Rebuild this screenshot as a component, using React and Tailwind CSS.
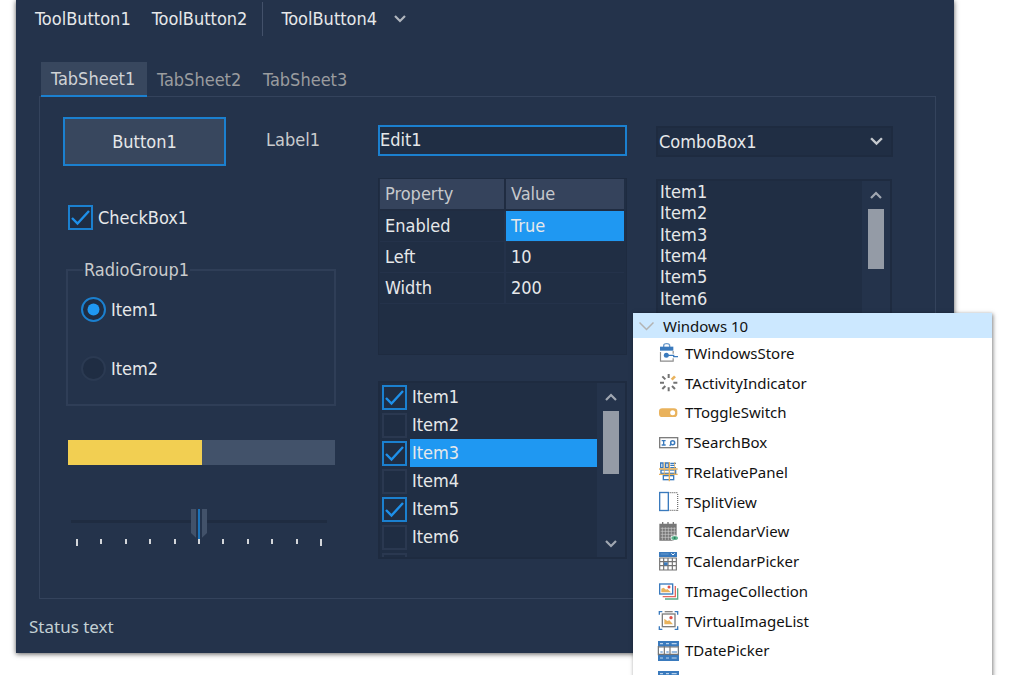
import React from "react";

const UI_FONT = "font-['DejaVu_Sans_Condensed','DejaVu_Sans',sans-serif]";

function Chevron({ up = false, className = "h-2 w-3" }) {
  return (
    <svg viewBox="0 0 12 8" className={className} fill="none" stroke="currentColor" strokeWidth="2.2" aria-hidden="true">
      <path d={up ? "M1 7 6 2l5 5" : "M1 1l5 5 5-5"} />
    </svg>
  );
}

function TickBox({ label, name = label, defaultChecked, className = "" }) {
  return (
    <label className={`flex items-center gap-[5px] ${className}`}>
      <span className="grid shrink-0">
        <input
          type="checkbox"
          aria-label={name}
          defaultChecked={defaultChecked}
          className="peer col-start-1 row-start-1 h-[25px] w-[25px] appearance-none border-2 border-[#2a3850] bg-[#1f2d43] checked:border-[#1b80cf]"
        />
        <svg
          viewBox="0 0 25 25"
          className="pointer-events-none invisible col-start-1 row-start-1 h-[25px] w-[25px] peer-checked:visible"
          fill="none"
          stroke="#1e90ea"
          strokeWidth="2.4"
          aria-hidden="true"
        >
          <path d="M4 13l5.5 5.500L21 6" />
        </svg>
      </span>
      {label}
    </label>
  );
}

function RadioButton({ label, defaultChecked }) {
  return (
    <label className="flex items-center gap-[5px]">
      <span className="grid shrink-0">
        <input
          type="radio"
          name="radiogroup1"
          defaultChecked={defaultChecked}
          className="peer col-start-1 row-start-1 h-[25px] w-[25px] appearance-none rounded-full border-2 border-[#2b3a52] bg-[#1f2d43] checked:border-[#1b80cf]"
        />
        <svg viewBox="0 0 25 25" className="pointer-events-none invisible col-start-1 row-start-1 h-[25px] w-[25px] peer-checked:visible" aria-hidden="true">
          <circle cx="12.5" cy="12.5" r="6" fill="#1f98f2" />
        </svg>
      </span>
      {label}
    </label>
  );
}

function ScrollBar({ thumb }) {
  return (
    <div className="flex w-7 shrink-0 flex-col items-center bg-[#24334b] text-[#a0a7b1]">
      <button type="button" aria-label="Scroll up" className="flex h-7 w-full items-center justify-center">
        <Chevron up />
      </button>
      <div className={`w-4 bg-[#949ba6] ${thumb}`} />
      <button type="button" aria-label="Scroll down" className="mt-auto flex h-[26px] w-full items-center justify-center">
        <Chevron />
      </button>
    </div>
  );
}

const GRAY = "#737373";
const BLUE = "#3a7abd";
const ORANGE = "#e9b25c";

const icons = {
  store: (
    <>
      <path d="M14 12V8q0-6 9-6t9 6v4" fill="none" stroke="#6b9bcc" strokeWidth="4" />
      <path d="M3 11h40v12H3z" fill={BLUE} />
      <path d="M4.500 27v27.500h38V46" fill="none" stroke="#8c8c8c" strokeWidth="3.500" />
      <path d="M42.500 24v8" stroke="#8c8c8c" strokeWidth="3.500" />
      <circle cx="22" cy="37" r="7.500" fill={BLUE} />
      <path d="M22 37h22v4h13" fill="none" stroke={BLUE} strokeWidth="4" />
    </>
  ),
  activity: (
    <g fill="none" strokeWidth="6">
      <path stroke={GRAY} d="M29 3v12M29 43v12M3 29h12M43 29h12M10 10l9 9M39 39l9 9M10 48l9-9" />
      <path stroke={ORANGE} strokeWidth="8" d="M38 20l10-10" />
    </g>
  ),
  toggle: (
    <>
      <rect x="0" y="16" width="55" height="26" rx="10" fill={ORANGE} />
      <circle cx="41" cy="29" r="7.500" fill="#fff" />
    </>
  ),
  search: (
    <>
      <rect x="2" y="14" width="54" height="30" fill="#fff" stroke="#7d7d7d" strokeWidth="4" />
      <path d="M8 23h12M8 36h12M14 23v13" stroke={BLUE} strokeWidth="4" />
      <circle cx="41" cy="29" r="6" fill="none" stroke={BLUE} strokeWidth="4.500" />
      <path d="M37 33l-5 5" stroke={BLUE} strokeWidth="4" />
    </>
  ),
  relative: (
    <>
      <g fill="#fff" stroke={BLUE} strokeWidth="4">
        <path d="M5 3h7v14H5zM20 3h8v14H20z" />
        <path d="M34 4h17M34 17h17M34 10h13" />
        <rect x="6" y="24" width="44" height="10" />
        <rect x="13" y="41" width="31" height="12" />
      </g>
      <path d="M0 21h56M31 0v58M0 37h56" stroke={ORANGE} strokeWidth="4" />
      <path d="M16 0v38M47 0v38" stroke={ORANGE} strokeWidth="2.5" />
    </>
  ),
  split: (
    <>
      <rect x="2" y="1.500" width="26" height="54" fill="#fff" stroke={BLUE} strokeWidth="4" />
      <path d="M32 2h25M56 6v50M32 55h25" fill="none" stroke="#666" strokeWidth="3.500" strokeDasharray="3 3" />
    </>
  ),
  calendar: (
    <>
      <path d="M1 5h52v42l-9 9H1z" fill="#777" />
      <path d="M11 0v9M27 0v9M43 0v9" stroke="#777" strokeWidth="4" />
      <path d="M5 19h45M5 28h45M5 37h45M5 46h45M10 16v38M19 16v38M28 16v38M37 16v38M46 16v38" stroke="#d0d0d0" strokeWidth="1.800" />
      <ellipse cx="47" cy="48" rx="12" ry="8" fill="#fff" />
      <ellipse cx="47" cy="48" rx="10" ry="6" fill="#61b590" />
      <circle cx="47" cy="48" r="3" fill="#287a59" />
    </>
  ),
  calendarPicker: (
    <>
      <path d="M0 0h54v15H0z" fill={BLUE} />
      <path d="M37 4l5 5 5-5" stroke="#fff" strokeWidth="3" fill="none" />
      <path d="M5 6h24" stroke="#7faad6" strokeWidth="2" />
      <path d="M2 18h50v36H2zM2 29h50M2 41h50M14 18v36M27 18v36M40 18v36" fill="none" stroke={GRAY} strokeWidth="3.500" />
      <path d="M15 31h11v9H15z" fill={BLUE} />
    </>
  ),
  images: (
    <>
      <path d="M56 22v32H18" fill="none" stroke="#5aaa87" strokeWidth="4" />
      <path d="M49 15v32H11" fill="none" stroke="#e4665d" strokeWidth="4" />
      <rect x="2" y="9" width="39" height="30" fill="#fff" stroke={BLUE} strokeWidth="4" />
      <path d="M7 34V23l7-3 7 6 4-2 11 10z" fill={ORANGE} />
      <circle cx="30" cy="18" r="4.500" fill="#e05048" />
    </>
  ),
  virtualImages: (
    <>
      <path d="M1 11V2h9M47 2h9v9M1 46v9h9M47 55h9v-9" fill="none" stroke={BLUE} strokeWidth="4" />
      <path d="M17 2h24" stroke="#858585" strokeWidth="4" />
      <rect x="10" y="9" width="38" height="38" fill="#fff" stroke="#7d7d7d" strokeWidth="4" />
      <path d="M16 40V23l9 7 6-2 11 12z" fill={ORANGE} />
      <circle cx="36" cy="20" r="5" fill="#e05048" />
    </>
  ),
  picker: (
    <>
      <path d="M-3 0h63v60H-3z" fill={BLUE} />
      <path d="M-1 17h59v24H-1z" fill="#fff" />
      <path d="M3 8h9M21 8h9M38 8h15M3 51h9M21 51h9M38 51h15" stroke="#b9d2eb" strokeWidth="3.500" />
      <path d="M-1 18h59M-1 40h59M16 15v28M33 15v28M58 15v28M-2 15v28" stroke={GRAY} strokeWidth="3.500" fill="none" />
      <path d="M4 33h7M22 33h7M38 33h16" stroke="#9bbce0" strokeWidth="6" />
    </>
  ),
};

const components = [
  ["TWindowsStore", "store"],
  ["TActivityIndicator", "activity"],
  ["TToggleSwitch", "toggle"],
  ["TSearchBox", "search"],
  ["TRelativePanel", "relative"],
  ["TSplitView", "split"],
  ["TCalendarView", "calendar"],
  ["TCalendarPicker", "calendarPicker"],
  ["TImageCollection", "images"],
  ["TVirtualImageList", "virtualImages"],
  ["TDatePicker", "picker"],
  ["TTimePicker", "picker"],
];

function ComponentPalette() {
  return (
    <section className="absolute top-[313px] left-[633px] w-[359px] bg-white font-['Noto_Sans',sans-serif] text-[15px] leading-5 text-[#111] shadow-[1px_1px_4px_rgba(0,0,0,0.5)]">
      <button type="button" aria-expanded="true" className="flex h-[25px] w-full items-center gap-[9px] bg-[#cce8ff] pl-[6px]">
        <svg viewBox="0 0 15 10" className="h-[10px] w-[15px]" fill="none" stroke="#b3b3b3" strokeWidth="1.500" aria-hidden="true">
          <path d="M.5 1.500 7.500 8.500 14.500 1.500" />
        </svg>
        Windows 10
      </button>
      <ul className="grid h-[357px] auto-rows-fr">
        {components.map(([name, icon]) => (
          <li key={name} className="flex min-h-0 items-center gap-[7px] pl-[26px]">
            <svg viewBox="0 0 57 57" className="h-[19px] w-[19px] shrink-0 overflow-visible" aria-hidden="true">
              {icons[icon]}
            </svg>
            {name}
          </li>
        ))}
      </ul>
    </section>
  );
}

function PropertyGrid() {
  return (
    <div className="mt-[22px] h-[177px] border border-[#1e2b40] bg-[#202e44] pr-[2px] pl-px">
      <table className="w-full table-fixed border-collapse text-left">
        <thead>
          <tr className="h-[31px] bg-[#35435c] text-[#c6c9cd]">
            <th scope="col" className="w-[125px] border-r-2 border-b-2 border-[#202c41] px-[5px] font-normal">Property</th>
            <th scope="col" className="border-b-2 border-[#202c41] px-[5px] font-normal">Value</th>
          </tr>
        </thead>
        <tbody>
          {[["Enabled", "True"], ["Left", "10"], ["Width", "200"]].map(([key, value]) => (
            <tr key={key} className="h-[31px]">
              <td className="border-r-2 border-b border-[#24324a] px-[5px]">{key}</td>
              <td className={`border-b border-[#24324a] px-[5px] ${value === "True" ? "bg-[#1f98f2]" : ""}`}>{value}</td>
            </tr>
          ))}
        </tbody>
      </table>
    </div>
  );
}

function CheckList() {
  return (
    <div className="mt-[26px] flex h-[178px] border-2 border-[#1e2b40] bg-[#202e44]">
      <ul className="min-w-0 flex-1 overflow-hidden pl-[2px]">
        {[1, 2, 3, 4, 5, 6].map((n) => (
          <li key={n} className={n === 3 ? "bg-[linear-gradient(#1f98f2,#1f98f2)] bg-[position:28px_0] bg-no-repeat" : ""}>
            <TickBox label={`Item${n}`} defaultChecked={n % 2 === 1} className="h-7" />
          </li>
        ))}
        <li>
          <TickBox name="Item7" className="h-7" />
        </li>
      </ul>
      <ScrollBar thumb="h-[63px]" />
    </div>
  );
}

export default function App() {
  return (
    <main className="relative h-screen overflow-hidden bg-white">
      <div className={`mr-[66px] ml-4 bg-[#24334b] pb-2 text-[18px] leading-6 text-[#e6e8ea] shadow-[0_1px_5px_rgba(0,0,0,0.65)] ${UI_FONT}`}>
        <div role="toolbar" className="flex h-[62px] items-start pl-[19px]">
          <div className="flex h-[38px] items-center">
            <button type="button">ToolButton1</button>
            <button type="button" className="ml-[21px]">ToolButton2</button>
            <span className="ml-[15px] h-[34px] w-px bg-[#43516a]" />
            <button type="button" className="ml-[18px] flex items-center gap-[17px]">
              ToolButton4
              <span className="text-[#b0b6be]"><Chevron /></span>
            </button>
          </div>
        </div>

        <div className="mr-[18px] ml-[23px]">
          <div role="tablist" className="flex pl-[2px] text-[#9a9c9f]">
            <button type="button" role="tab" aria-selected="true" className="-mb-px h-[35px] w-[106px] border-b-2 border-[#1b80cf] bg-[#38475e] px-[10px] text-left text-[#d0d3d6]">
              TabSheet1
            </button>
            <button type="button" role="tab" aria-selected="false" className="w-[106px] px-[10px] pt-px text-left">TabSheet2</button>
            <button type="button" role="tab" aria-selected="false" className="w-[106px] px-[10px] pt-px text-left">TabSheet3</button>
          </div>

          <div role="tabpanel" className="grid h-[503px] grid-cols-[315fr_278fr_237fr] border border-[#34435c] pr-[42px] pl-[23px]">
            <div className="pt-5 pr-[42px]">
              <div className="flex items-start">
                <button type="button" className="h-[49px] w-[163px] border-2 border-[#1b80cf] bg-[#38475e]">Button1</button>
                <span className="mt-[11px] ml-10 text-[#c9cbcd]">Label1</span>
              </div>
              <TickBox label="CheckBox1" defaultChecked className="mt-[39px] ml-[5px] w-fit" />
              <fieldset className="mt-[28px] ml-[3px] h-[148px] border-2 border-[#2f3e57] pl-[13px]">
                <legend className="ml-[2px] px-px text-[#c9cbcd]">RadioGroup1</legend>
                <div className="flex flex-col items-start gap-[34px] pt-[15px]">
                  <RadioButton label="Item1" defaultChecked />
                  <RadioButton label="Item2" />
                </div>
              </fieldset>
              <div role="progressbar" aria-label="Progress" aria-valuenow={50} className="mt-[34px] mr-px ml-[5px] h-[25px] bg-[#42526a]">
                <div className="h-full w-1/2 bg-[#f2cf52]" />
              </div>
              <div className="mt-[44px] mr-[9px] ml-2">
                <input
                  type="range"
                  aria-label="Position"
                  min="0"
                  max="10"
                  defaultValue="5"
                  className="block h-[30px] w-full appearance-none bg-transparent bg-[linear-gradient(#1f2c41,#1f2c41)] bg-[length:100%_3px] bg-[position:0_11px] bg-no-repeat [&::-webkit-slider-thumb]:h-[30px] [&::-webkit-slider-thumb]:w-4 [&::-webkit-slider-thumb]:appearance-none [&::-webkit-slider-thumb]:bg-[linear-gradient(90deg,#42526a_5px,#24334b_5px,#24334b_7px,#1b72b8_7px,#1b72b8_9px,#24334b_9px,#24334b_11px,#42526a_11px)] [&::-webkit-slider-thumb]:[clip-path:polygon(0_0,100%_0,100%_80%,60%_100%,40%_100%,0_80%)]"
                />
                <div className="flex h-[7px] items-start justify-between px-[5px]">
                  {Array.from({ length: 11 }, (_, i) => (
                    <span key={i} className={`w-[2px] bg-[#d3d6da] ${i % 10 === 0 ? "h-[7px]" : "h-[5px]"}`} />
                  ))}
                </div>
              </div>
            </div>

            <div className="pt-7 pr-[29px]">
              <input
                type="text"
                aria-label="Edit1"
                defaultValue="Edit1"
                className="block h-[31px] w-full border-2 border-[#1b80cf] bg-[#202e44] pb-[2px] outline-none"
              />
              <PropertyGrid />
              <CheckList />
            </div>

            <div className="pt-[29px]">
              <div className="grid">
                <select aria-label="ComboBox1" className="col-start-1 row-start-1 h-[31px] w-full appearance-none border-2 border-[#1e2b40] bg-[#202e44] px-px">
                  <option>ComboBox1</option>
                </select>
                <span className="pointer-events-none col-start-1 row-start-1 mr-[10px] self-center justify-self-end text-[#c5c9ce]">
                  <Chevron className="h-[9px] w-[13px]" />
                </span>
              </div>
              <div className="mt-[22px] mr-px flex h-[177px] border-2 border-[#1e2b40] bg-[#202e44]">
                <ul role="listbox" aria-label="Items" className="grid h-32 flex-1 auto-rows-fr pl-[2px]">
                  {[1, 2, 3, 4, 5, 6].map((n) => (
                    <li key={n} role="option" aria-selected="false" className="min-h-0 leading-[22px]">Item{n}</li>
                  ))}
                </ul>
                <ScrollBar thumb="h-[60px]" />
              </div>
            </div>
          </div>
        </div>

        <footer className="flex h-[46px] items-end pb-1 pl-[13px] font-['Noto_Sans',sans-serif] text-[17px] leading-7 text-[#c3d0d4]">Status text</footer>
      </div>

      <ComponentPalette />
    </main>
  );
}
